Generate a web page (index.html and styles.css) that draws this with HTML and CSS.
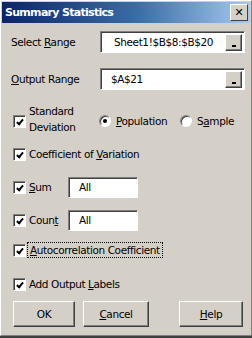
FILE: index.html
```html
<!DOCTYPE html>
<html lang="en">
<head>
    <meta charset="UTF-8">
    <title>Summary Statistics</title>
    <link rel="stylesheet" href="styles.css">
</head>
<body>
<div class="window">
    <div class="titlebar">
        <span class="title">Summary Statistics</span>
        <span class="close">&#x2715;</span>
    </div>
    <div class="content">
        <div class="row range-row first">
            <span class="label">Select <u>R</u>ange</span>
            <div class="field wide">
                <span class="value">Sheet1!$B$8:$B$20</span>
                <span class="pick"><span class="bar"></span></span>
            </div>
        </div>
        <div class="row range-row">
            <span class="label"><u>O</u>utput Range</span>
            <div class="field wide">
                <span class="value short">$A$21</span>
                <span class="pick"><span class="bar"></span></span>
            </div>
        </div>

        <div class="row std-row">
            <span class="check checked"></span>
            <span class="two-line">Standard<br>Deviation</span>
            <span class="radio on"></span>
            <span class="opt first-opt"><u>P</u>opulation</span>
            <span class="radio"></span>
            <span class="opt">S<u>a</u>mple</span>
        </div>
        <div class="row check-row cov">
            <span class="check checked"></span>
            <span>Coefficient of <u>V</u>ariation</span>
        </div>
        <div class="row check-row sum">
            <span class="check checked"></span>
            <span class="short-label"><u>S</u>um</span>
            <div class="field small"><span class="value">All</span></div>
        </div>
        <div class="row check-row count">
            <span class="check checked"></span>
            <span class="short-label">Coun<u>t</u></span>
            <div class="field small"><span class="value">All</span></div>
        </div>
        <div class="row check-row auto">
            <span class="check checked"></span>
            <span class="focus"><u>A</u>utocorrelation Coefficient</span>
        </div>
        <div class="row check-row labels">
            <span class="check checked"></span>
            <span>Add Output <u>L</u>abels</span>
        </div>

        <div class="buttons">
            <button class="btn ok">OK</button>
            <button class="btn cancel"><u>C</u>ancel</button>
            <button class="btn help"><u>H</u>elp</button>
        </div>
    </div>
</div>
</body>
</html>
```

FILE: styles.css
```css
body {
    margin: 0;
    background-color: #404040;
    font-family: "DejaVu Sans", sans-serif;
    font-size: 10.5px;
    letter-spacing: -0.4px;
    color: #000;
}

.window {
    width: 250px;
    height: 334px;
    background-color: #d4d0c8;
    border-left: 1px solid #ffffff;
    border-top: 1px solid #ffffff;
    border-right: 1px solid #808080;
    border-bottom: 1px solid #808080;
}

.titlebar {
    height: 21px;
    margin: 1px 1px 0 1px;
    padding: 0 2px 0 3px;
    display: flex;
    align-items: center;
    justify-content: space-between;
    background: linear-gradient(to right, #0a246a, #3a6ea5 55%, #a6caf0);
}

.title {
    color: #fff;
    font-weight: bold;
    font-size: 11px;
    letter-spacing: -0.7px;
}

.close {
    width: 16px;
    height: 15px;
    background-color: #d4d0c8;
    border-left: 1px solid #fff;
    border-top: 1px solid #fff;
    border-right: 1px solid #404040;
    border-bottom: 1px solid #404040;
    display: flex;
    align-items: center;
    justify-content: center;
    font-size: 11px;
    font-weight: bold;
    letter-spacing: 0;
}

.content {
    padding: 0 6px 0 9px;
}

.row {
    display: flex;
    align-items: center;
}

.range-row {
    height: 22px;
    margin-top: 15px;
}

.range-row.first {
    margin-top: 8px;
}

.label {
    width: 89px;
    padding-left: 1px;
    flex-shrink: 0;
}

.field {
    background-color: #fff;
    border-left: 1px solid #808080;
    border-top: 1px solid #808080;
    border-right: 1px solid #ffffff;
    border-bottom: 1px solid #ffffff;
    box-shadow: inset 1px 1px 0 #404040;
    display: flex;
    align-items: center;
    box-sizing: border-box;
}

.field.wide {
    width: 148px;
    height: 22px;
}

.field.small {
    width: 70px;
    height: 21px;
}

.value {
    flex: 1;
    padding-left: 13px;
}

.value.short {
    padding-left: 10px;
}

.field.small .value {
    padding-left: 10px;
}

.pick {
    width: 17px;
    height: 17px;
    margin-right: 2px;
    background-color: #d4d0c8;
    border-left: 1px solid #fff;
    border-top: 1px solid #fff;
    border-right: 1px solid #404040;
    border-bottom: 1px solid #404040;
    box-shadow: inset -1px -1px 0 #808080;
    box-sizing: border-box;
    position: relative;
}

.bar {
    position: absolute;
    left: 6px;
    bottom: 3px;
    width: 4px;
    height: 2px;
    background-color: #000;
}

.check {
    width: 13px;
    height: 13px;
    background-color: #fff;
    border-left: 1px solid #808080;
    border-top: 1px solid #808080;
    border-right: 1px solid #ffffff;
    border-bottom: 1px solid #ffffff;
    box-shadow: inset 1px 1px 0 #404040;
    box-sizing: border-box;
    margin: 0 3px 0 3px;
    flex-shrink: 0;
    position: relative;
}

.check.checked::after {
    content: "";
    position: absolute;
    left: 4px;
    top: 2px;
    width: 2px;
    height: 5px;
    border-right: 2px solid #000;
    border-bottom: 2px solid #000;
    transform: rotate(40deg);
}

.std-row {
    margin-top: 14px;
    height: 34px;
}

.two-line {
    width: 70px;
    flex-shrink: 0;
    line-height: 16px;
    margin-top: -5px;
}

.radio {
    width: 12px;
    height: 12px;
    border-radius: 50%;
    background-color: #fff;
    border: 1px solid;
    border-color: #808080 #fff #fff #808080;
    box-shadow: inset 1px 1px 0 #404040;
    box-sizing: border-box;
    position: relative;
    margin-right: 5px;
    flex-shrink: 0;
}

.radio.on::after {
    content: "";
    position: absolute;
    left: 3px;
    top: 3px;
    width: 4px;
    height: 4px;
    border-radius: 50%;
    background-color: #000;
}

.first-opt {
    width: 64px;
    flex-shrink: 0;
}

.check-row {
    height: 20px;
}

.cov {
    margin-top: 6px;
}

.sum {
    margin-top: 13px;
}

.count {
    margin-top: 13px;
}

.auto {
    margin-top: 10px;
}

.labels {
    margin-top: 14px;
}

.short-label {
    width: 39px;
}

.focus {
    outline: 1px dotted #000;
    outline-offset: 1px;
    padding: 0 1px;
}

.buttons {
    display: flex;
    margin-top: 7px;
}

.btn {
    height: 26px;
    background-color: #d4d0c8;
    border-left: 1px solid #fff;
    border-top: 1px solid #fff;
    border-right: 1px solid #404040;
    border-bottom: 1px solid #404040;
    box-shadow: inset -1px -1px 0 #808080;
    font-family: "DejaVu Sans", sans-serif;
    font-size: 10.5px;
    letter-spacing: -0.4px;
    padding: 0;
    color: #000;
}

.ok {
    width: 62px;
    margin-left: 3px;
}

.cancel {
    width: 66px;
    margin-left: 8px;
}

.help {
    width: 64px;
    margin-left: 30px;
}
```
